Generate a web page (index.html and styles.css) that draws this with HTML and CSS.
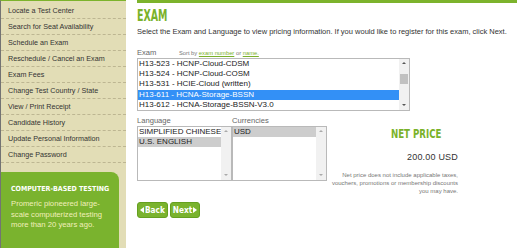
FILE: index.html
```html
<html lang="en"><head><meta charset="utf8">
<title>Exam Fees</title>
<link rel="stylesheet" href="styles.css">
</head><body>
<div class="page">
    <aside class="sidebar">
        <ul class="nav">
            <li><a href="#">Locate a Test Center</a></li>
            <li><a href="#">Search for Seat Availability</a></li>
            <li><a href="#">Schedule an Exam</a></li>
            <li><a href="#">Reschedule / Cancel an Exam</a></li>
            <li><a href="#">Exam Fees</a></li>
            <li><a href="#">Change Test Country / State</a></li>
            <li><a href="#">View / Print Receipt</a></li>
            <li><a href="#">Candidate History</a></li>
            <li><a href="#">Update Personal Information</a></li>
            <li><a href="#">Change Password</a></li>
        </ul>
        <div class="promo">
            <h3>Computer-Based Testing</h3>
            <p>Promeric pioneered large-scale computerized testing more than 20 years ago.</p>
        </div>
    </aside>

    <main class="content">
        <h1><span class="display">Exam</span></h1>
        <p class="intro">Select the Exam and Language to view pricing information. If you would like to register for this exam, click Next.</p>

        <div class="field-head">
            <label>Exam</label>
            <span class="sort">Sort by <a href="#">exam number</a> or <a href="#">name.</a></span>
        </div>
        <div class="listbox exam-list">
            <div class="options">
                <div class="opt">H13-523 - HCNP-Cloud-CDSM</div>
                <div class="opt">H13-524 - HCNP-Cloud-COSM</div>
                <div class="opt">H13-531 - HCIE-Cloud (written)</div>
                <div class="opt active">H13-611 - HCNA-Storage-BSSN</div>
                <div class="opt">H13-612 - HCNA-Storage-BSSN-V3.0</div>
            </div>
            <div class="scrollbar">
                <span class="arrow up"></span>
                <span class="track"><span class="thumb"></span></span>
                <span class="arrow down"></span>
            </div>
        </div>

        <div class="pricing">
            <div class="field">
                <label>Language</label>
                <div class="listbox short">
                    <div class="options">
                        <div class="opt">SIMPLIFIED CHINESE</div>
                        <div class="opt picked">U.S. ENGLISH</div>
                    </div>
                    <div class="scrollbar">
                        <span class="arrow up"></span>
                        <span class="track"></span>
                        <span class="arrow down"></span>
                    </div>
                </div>
            </div>
            <div class="field">
                <label>Currencies</label>
                <div class="listbox short">
                    <div class="options">
                        <div class="opt picked">USD</div>
                    </div>
                    <div class="scrollbar">
                        <span class="arrow up"></span>
                        <span class="track"></span>
                        <span class="arrow down"></span>
                    </div>
                </div>
            </div>
            <div class="price">
                <h2><span class="display">Net Price</span></h2>
                <div class="amount">200.00 USD</div>
                <p class="note">Net price does not include applicable taxes,<br>vouchers, promotions or membership discounts<br>you may have.</p>
            </div>
        </div>

        <div class="actions">
            <a class="btn" href="#"><span class="tri left"></span>Back</a>
            <a class="btn" href="#">Next<span class="tri right"></span></a>
        </div>
    </main>
</div>
</body></html>
```

FILE: styles.css
```css
body {
    margin: 0;
    background: #fff;
    color: #333;
    font-family: "Liberation Sans", Arial, sans-serif;
}

.page {
    display: flex;
    height: 248px;
    overflow: hidden;
}

/* left column */
.sidebar {
    flex: none;
    width: 125px;
    background: #e2ddb6;
    border-left: 1px solid #737373;
    border-top: 1px solid #7cb32c;
    padding-top: 2px;
}

.nav {
    list-style: none;
    margin: 0;
    padding: 0;
}
.nav li {
    height: 15px;
    border-bottom: 1px dashed #bdb692;
}
.nav a {
    display: block;
    padding-left: 7px;
    line-height: 15px;
    font-size: 7.2px;
    color: #333;
    text-decoration: none;
}

.promo {
    margin-top: 9px;
    width: 108px;
    height: 90px;
    padding: 11px 0 0 10px;
    background: #7ab32e;
    border-radius: 0 8px 0 0;
}
.promo h3 {
    margin: 0;
    color: #fff;
    font-family: "DejaVu Sans Condensed", sans-serif;
    font-size: 7px;
    line-height: 12px;
    white-space: nowrap;
    text-transform: uppercase;
}
.promo p {
    margin: 4px 0 0;
    padding-right: 6px;
    color: #f1efbb;
    font-size: 7.7px;
    line-height: 10.5px;
}

/* main column */
.content {
    flex: 1;
    margin-left: 11px;
    border-top: 3px solid #7cb32c;
}

.display {
    display: inline-block;
    font-family: "DejaVu Sans Condensed", sans-serif;
    font-weight: bold;
    text-transform: uppercase;
    color: #7ab22a;
}

h1 {
    margin: 0;
    padding-top: 5px;
    font-size: 15px;
    line-height: 16px;
}
h1 .display {
    transform: scaleX(0.7);
    transform-origin: left center;
}

.intro {
    margin: 3px 0 0;
    font-size: 7.5px;
    line-height: 10px;
}

.field-head {
    margin-top: 8px;
    line-height: 10px;
}
label {
    display: block;
    font-size: 7.6px;
    line-height: 10px;
    color: #666;
}
.field-head label {
    display: inline;
}
.sort {
    margin-left: 18px;
    font-size: 5.8px;
    color: #777;
}
.sort a {
    color: #7ab22a;
}

.listbox {
    display: flex;
    border: 1px solid #b9b9b9;
    background: #fff;
}
.exam-list {
    width: 271px;
    height: 51px;
}
.options {
    flex: 1;
    overflow: hidden;
}
.opt {
    height: 10px;
    line-height: 10px;
    padding-left: 1px;
    font-size: 8px;
    white-space: nowrap;
    color: #222;
}
.exam-list .opt {
    height: 10.2px;
    line-height: 10.2px;
}
.opt.active {
    background: #3390f6;
    color: #fff;
}
.opt.picked {
    background: #cdcdcd;
}

.scrollbar {
    flex: none;
    width: 10px;
    display: flex;
    flex-direction: column;
    background: #f1f1f1;
}
.arrow {
    height: 9px;
    position: relative;
}
.arrow::after {
    content: "";
    position: absolute;
    left: 3px;
    top: 3px;
    border-left: 2px solid transparent;
    border-right: 2px solid transparent;
}
.arrow.up::after {
    border-bottom: 2px solid #555;
}
.arrow.down::after {
    border-top: 2px solid #555;
}
.short .arrow::after {
    border-bottom-color: #aaa;
    border-top-color: #aaa;
}
.track {
    flex: 1;
}
.thumb {
    display: block;
    width: 8px;
    height: 10px;
    margin: 6px auto 0;
    background: #c1c1c1;
}

.pricing {
    display: flex;
    margin-top: 5px;
}
.short {
    width: 93px;
    height: 53px;
}
.price {
    width: 178px;
    padding-top: 11px;
}
h2 {
    margin: 0;
    text-align: center;
    font-size: 13px;
    line-height: 14px;
}
h2 .display {
    transform: scaleX(0.74);
}
.amount {
    margin-top: 10px;
    padding-right: 47px;
    text-align: right;
    font-size: 9px;
    line-height: 12px;
    letter-spacing: 0.2px;
}
.note {
    margin: 8px 0 0;
    padding-right: 47px;
    text-align: right;
    font-size: 6px;
    line-height: 8px;
    color: #777;
}

.actions {
    display: flex;
    gap: 2px;
    margin-top: 7px;
}
.btn {
    display: flex;
    align-items: center;
    gap: 1px;
    height: 14px;
    padding: 0 2px;
    background: #7ab32e;
    border: 1px solid #65a020;
    border-radius: 3px;
    color: #fff;
    font-family: "DejaVu Sans Condensed", sans-serif;
    font-weight: bold;
    font-size: 8.2px;
    text-decoration: none;
}
.tri {
    border-top: 3px solid transparent;
    border-bottom: 3px solid transparent;
}
.tri.left {
    border-right: 4px solid #fff;
}
.tri.right {
    border-left: 4px solid #fff;
}
```
